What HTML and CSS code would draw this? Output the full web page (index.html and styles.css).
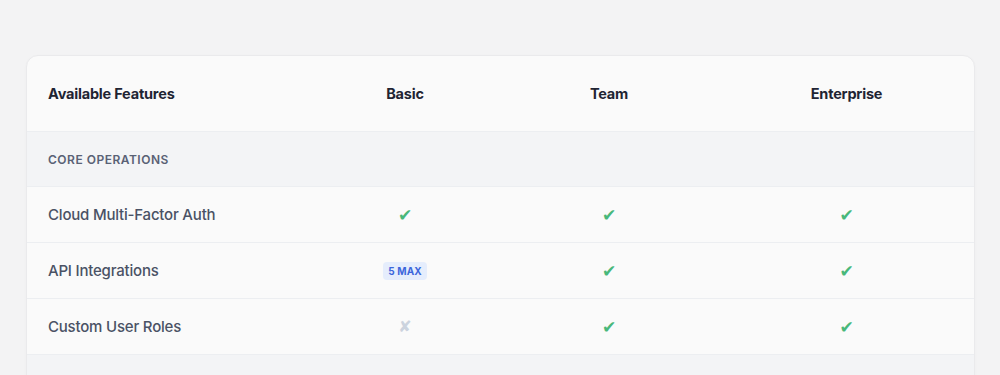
FILE: index.html
```html
<!DOCTYPE html>
<html lang="en">
<head>
<meta charset="utf-8">
<title>Feature Comparison</title>
<link rel="stylesheet" href="styles.css">
</head>
<body>
<div class="page">
  <div class="card">
    <div class="row head">
      <div class="cell feat">Available Features</div>
      <div class="cell plan">Basic</div>
      <div class="cell plan">Team</div>
      <div class="cell plan">Enterprise</div>
    </div>
    <div class="section">Core Operations</div>
    <div class="row">
      <div class="cell name">Cloud Multi-Factor Auth</div>
      <div class="cell val"><span class="yes">✔</span></div>
      <div class="cell val"><span class="yes">✔</span></div>
      <div class="cell val"><span class="yes">✔</span></div>
    </div>
    <div class="row">
      <div class="cell name">API Integrations</div>
      <div class="cell val"><span class="badge">5 MAX</span></div>
      <div class="cell val"><span class="yes">✔</span></div>
      <div class="cell val"><span class="yes">✔</span></div>
    </div>
    <div class="row">
      <div class="cell name">Custom User Roles</div>
      <div class="cell val"><span class="no">✘</span></div>
      <div class="cell val"><span class="yes">✔</span></div>
      <div class="cell val"><span class="yes">✔</span></div>
    </div>
    <div class="section"></div>
  </div>
</div>
</body>
</html>
```

FILE: styles.css
```css
html, body {
  margin: 0;
  padding: 0;
}
*, *::before, *::after {
  box-sizing: border-box;
}
body {
  background: #f3f3f4;
  font-family: Inter, "Noto Sans", sans-serif;
  color: #1f2433;
  height: 375px;
  overflow: hidden;
}
.page {
  padding: 55px 25px 0 26px;
}
.card {
  background: #fafafa;
  border: 1px solid #eaeaec;
  border-radius: 12px;
  overflow: hidden;
  box-shadow: 0 1px 3px rgba(0,0,0,0.03);
}
.row {
  display: grid;
  grid-template-columns: 284px 188px 220px 1fr;
  height: 56px;
  border-bottom: 1px solid #eceef1;
}
.row.head {
  height: 76px;
}
.cell {
  display: flex;
  align-items: center;
}
.feat {
  padding-left: 21px;
  font-size: 14.5px;
  font-weight: 700;
  letter-spacing: -0.2px;
  color: #1f2433;
}
.plan {
  justify-content: center;
  font-size: 14.5px;
  font-weight: 700;
  letter-spacing: -0.2px;
  color: #1f2433;
}
.section {
  height: 55px;
  display: flex;
  align-items: center;
  padding-left: 21px;
  background: #f3f4f6;
  border-bottom: 1px solid #eceef1;
  font-size: 12px;
  font-weight: 600;
  text-transform: uppercase;
  letter-spacing: 0.5px;
  color: #596175;
}
.name {
  padding-left: 21px;
  font-size: 15px;
  font-weight: 500;
  letter-spacing: -0.2px;
  color: #4a5265;
}
.val {
  justify-content: center;
}
.yes {
  color: #48b87a;
  font-size: 17px;
  font-family: "DejaVu Sans", sans-serif;
}
.no {
  color: #ccd3de;
  font-size: 16px;
  font-family: "DejaVu Sans", sans-serif;
}
.badge {
  background: #e5edfc;
  color: #3c66db;
  font-size: 10px;
  font-weight: 700;
  padding: 3px 5px;
  border-radius: 4px;
  letter-spacing: 0.1px;
}
```
